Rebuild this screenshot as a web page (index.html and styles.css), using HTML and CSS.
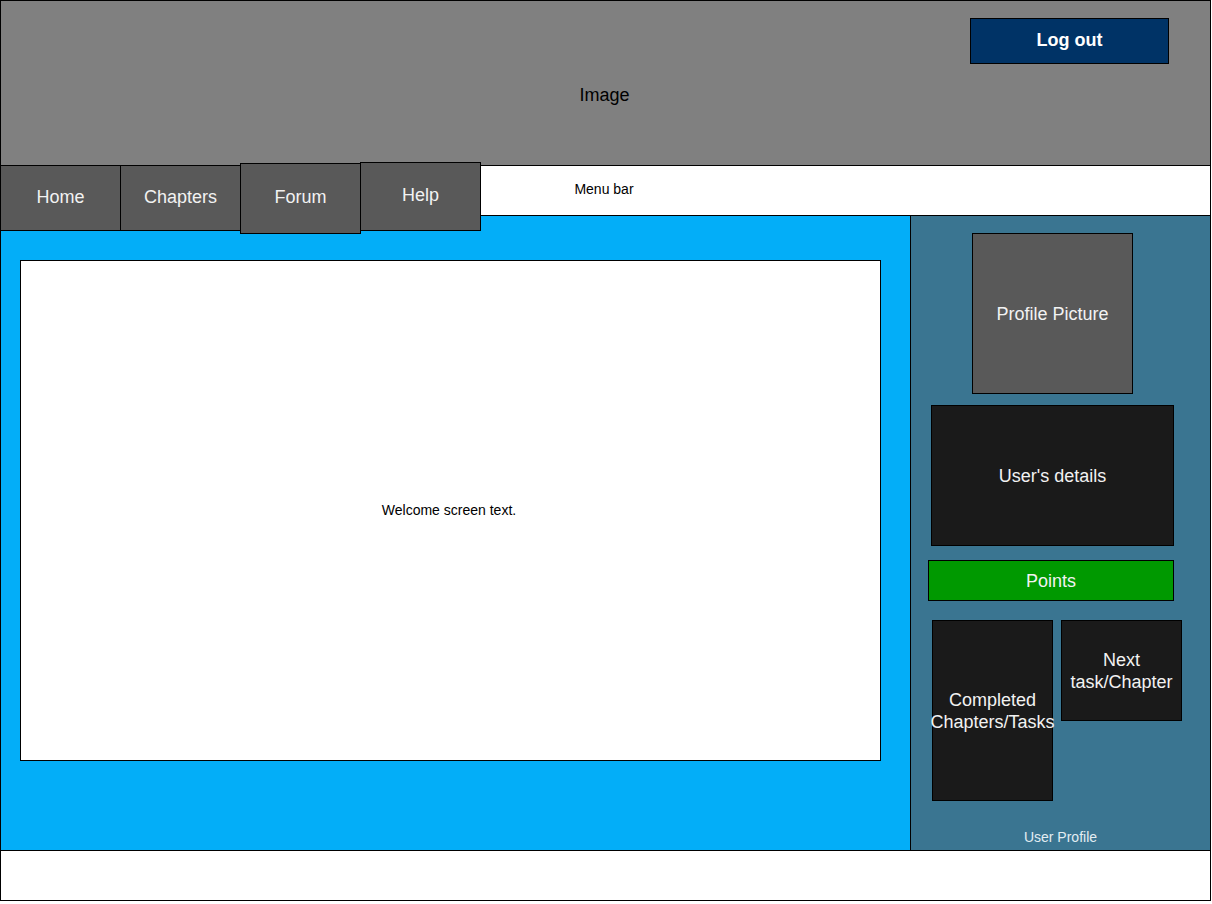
FILE: index.html
```html
<!DOCTYPE html>
<html>
<head>
<meta charset="utf-8">
<title>Wireframe</title>
<link rel="stylesheet" href="styles.css">
</head>
<body>
<div class="page">
  <header class="header">
    <div class="header-top">
      <button class="logout">Log out</button>
    </div>
    <div class="image-label">Image</div>
  </header>
  <div class="menubar">Menu bar</div>
  <nav class="nav">
    <a class="nav-btn home">Home</a>
    <a class="nav-btn chapters">Chapters</a>
    <a class="nav-btn forum">Forum</a>
    <a class="nav-btn help">Help</a>
  </nav>
  <main class="main">
    <section class="content">
      <div class="welcome">Welcome screen text.</div>
    </section>
    <aside class="sidebar">
      <div class="box profile-pic">Profile Picture</div>
      <div class="box details">User's details</div>
      <div class="box points">Points</div>
      <div class="tasks-row">
        <div class="box completed">Completed<br>Chapters/Tasks</div>
        <div class="box next">Next<br>task/Chapter</div>
      </div>
      <div class="sidebar-label">User Profile</div>
    </aside>
  </main>
  <footer class="footer"></footer>
</div>
</body>
</html>
```

FILE: styles.css
```css
* { box-sizing: border-box; }
html, body { margin: 0; padding: 0; background: #fff; }
body { font-family: "Liberation Sans", Arial, Helvetica, sans-serif; }

.page {
  position: relative;
  width: 1211px;
}

.header {
  height: 166px;
  background: #808080;
  border: 1px solid #000;
  display: flex;
  flex-direction: column;
}
.header-top {
  display: flex;
  justify-content: flex-end;
  padding-top: 17px;
  padding-right: 41px;
}
.logout {
  width: 199px;
  height: 46px;
  background: #003366;
  border: 1px solid #000;
  color: #fff;
  font-family: inherit;
  font-weight: bold;
  font-size: 18px;
  padding: 0 0 2px 0;
}
.image-label {
  text-align: center;
  font-size: 18px;
  color: #000;
  margin-top: 21px;
  padding-right: 2px;
}

.menubar {
  height: 51px;
  margin-top: -1px;
  border: 1px solid #000;
  background: #fff;
  display: flex;
  align-items: center;
  justify-content: center;
  font-size: 14px;
  color: #000;
  padding-bottom: 3px;
  padding-right: 3px;
}

.nav {
  position: absolute;
  top: 162px;
  left: 0;
  display: flex;
  align-items: flex-start;
}
.nav-btn {
  width: 121px;
  background: #595959;
  border: 1px solid #000;
  color: #f2f2f2;
  font-size: 18px;
  display: flex;
  align-items: center;
  justify-content: center;
  padding-bottom: 2px;
  margin-left: -1px;
}
.nav-btn.home { margin-left: 0; margin-top: 3px; height: 66px; }
.nav-btn.chapters { margin-top: 3px; height: 66px; }
.nav-btn.forum { margin-top: 1px; height: 71px; }
.nav-btn.help { margin-top: 0; height: 69px; }

.main {
  display: flex;
  height: 636px;
  margin-top: -1px;
  border: 1px solid #000;
}
.content {
  width: 909px;
  background: #03aef8;
  padding: 44px 0 0 19px;
}
.welcome {
  width: 861px;
  height: 501px;
  background: #fff;
  border: 1px solid #000;
  display: flex;
  align-items: center;
  justify-content: center;
  font-size: 14px;
  color: #000;
  padding-bottom: 2px;
  padding-right: 3px;
}

.sidebar {
  flex: 1;
  background: #3a7591;
  border-left: 1px solid #000;
  display: flex;
  flex-direction: column;
  align-items: flex-start;
}
.box {
  border: 1px solid #000;
  color: #f2f2f2;
  font-size: 18px;
  line-height: 22px;
  display: flex;
  align-items: center;
  justify-content: center;
  text-align: center;
  white-space: nowrap;
}
.profile-pic {
  width: 161px;
  height: 161px;
  background: #595959;
  margin: 17px 0 0 61px;
}
.details {
  width: 243px;
  height: 141px;
  background: #1a1a1a;
  margin: 11px 0 0 20px;
}
.points {
  width: 246px;
  height: 41px;
  background: #009900;
  margin: 14px 0 0 17px;
}
.tasks-row {
  display: flex;
  align-items: flex-start;
  gap: 8px;
  margin: 19px 0 0 21px;
}
.completed {
  width: 121px;
  height: 181px;
  background: #1a1a1a;
}
.next {
  width: 121px;
  height: 101px;
  background: #1a1a1a;
}
.sidebar-label {
  align-self: stretch;
  text-align: center;
  font-size: 14px;
  color: #e3edf3;
  margin-top: 28px;
}

.footer {
  height: 51px;
  margin-top: -1px;
  border: 1px solid #000;
  background: #fff;
}
```
